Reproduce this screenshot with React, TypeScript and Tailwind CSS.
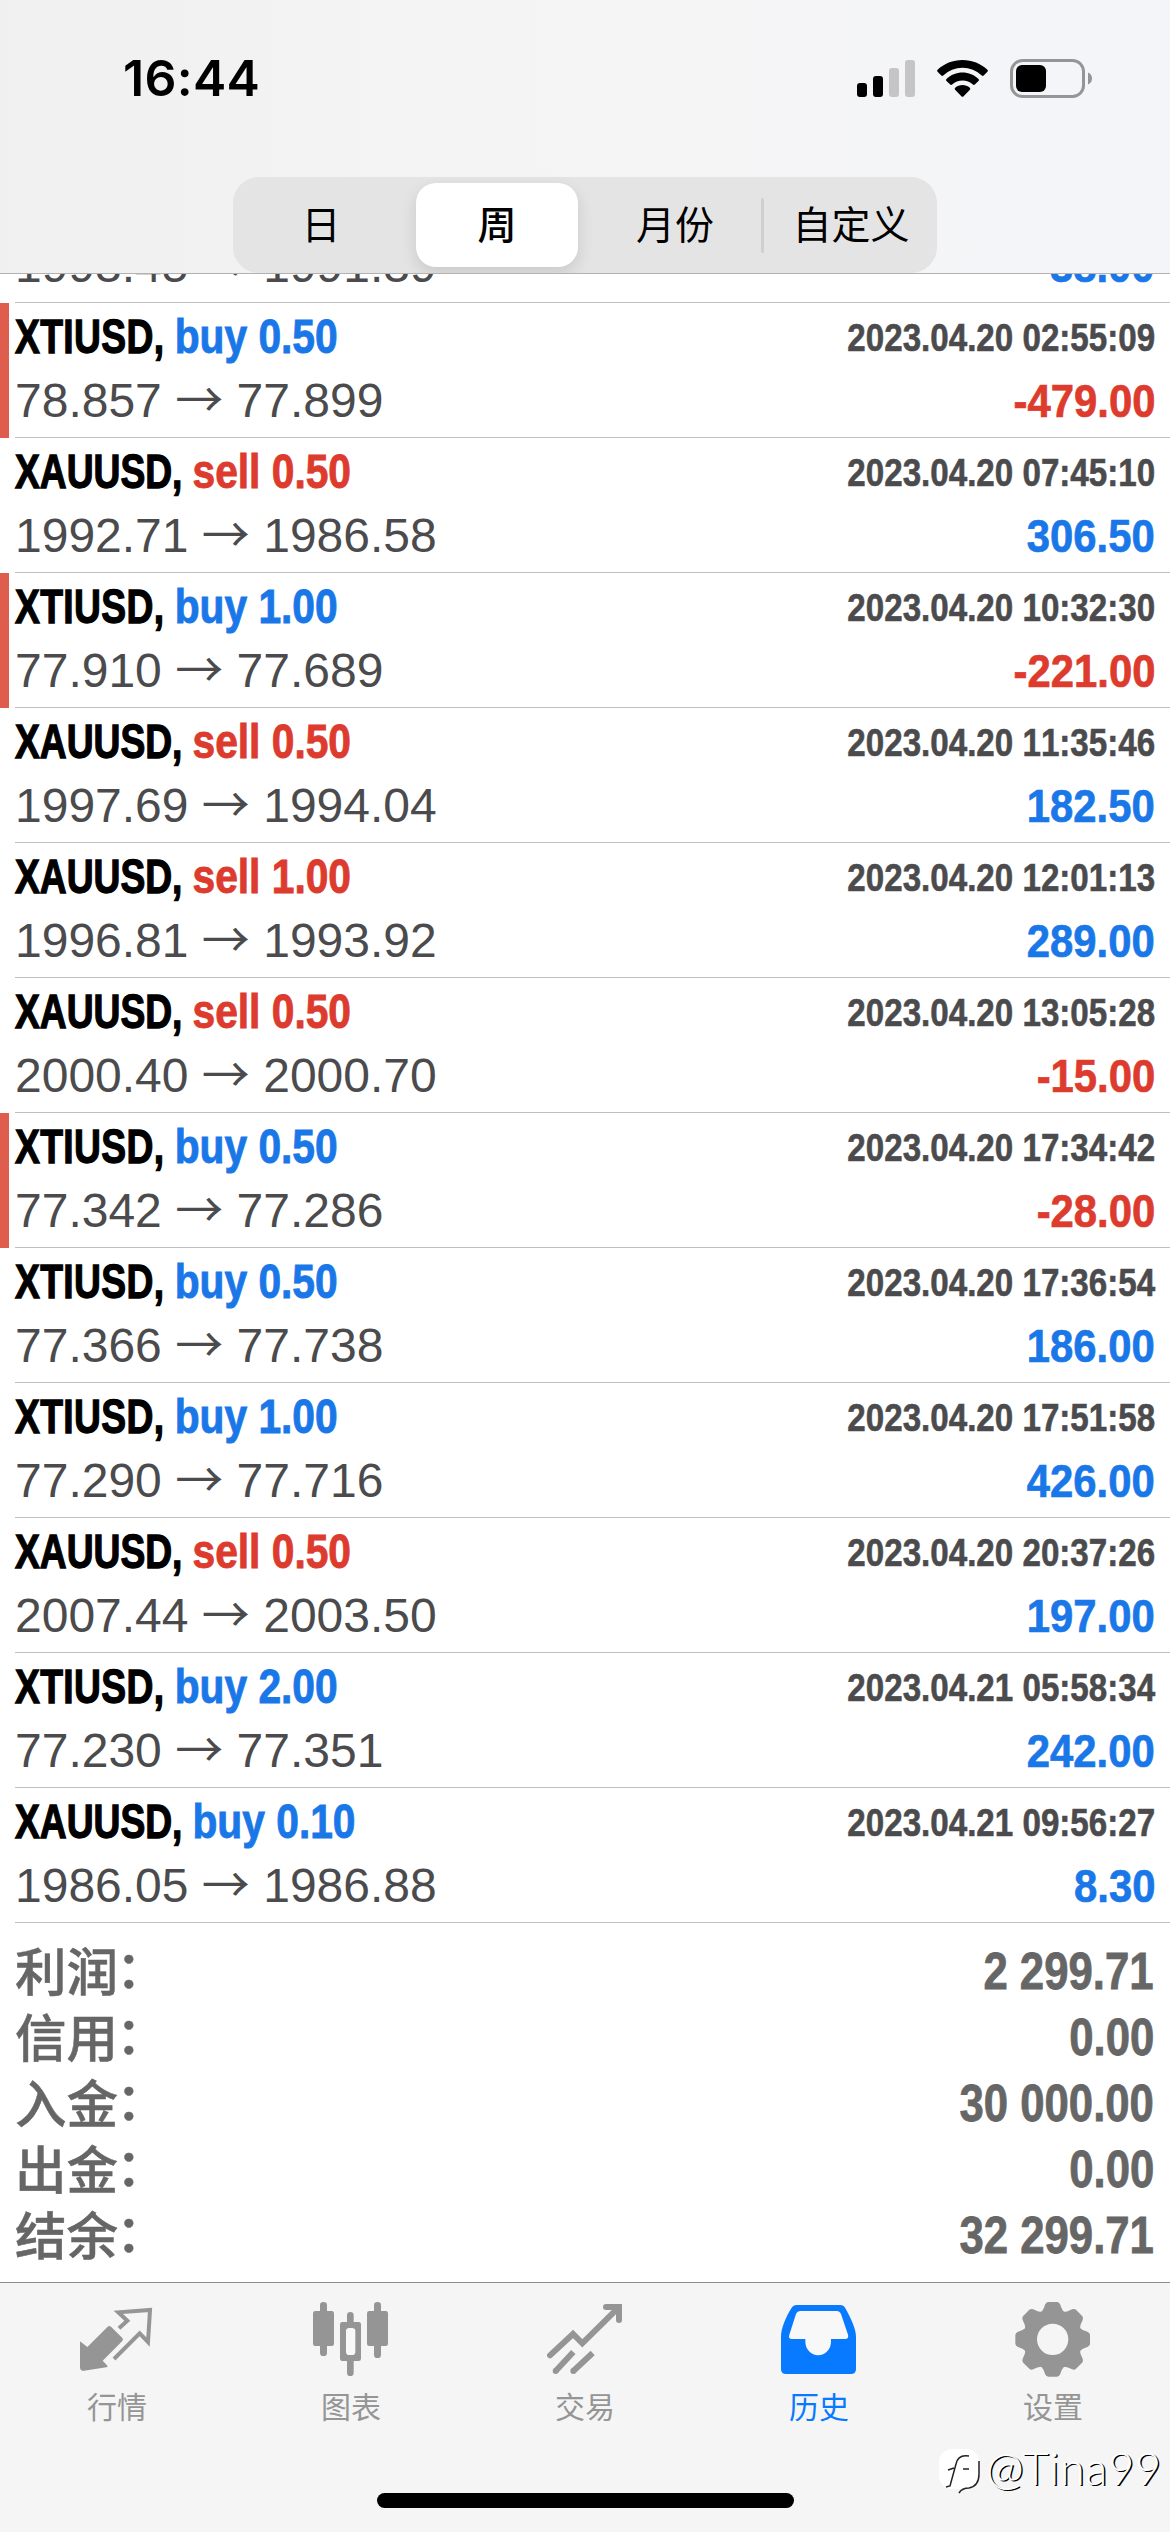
import clsx from 'clsx';
import type { ReactNode } from 'react';

interface Deal {
  symbol: string;
  side: 'buy' | 'sell';
  volume: string;
  open: string;
  close: string;
  time: string;
  profit: string;
  marked?: boolean;
}

const deals: Deal[] = [
  { symbol: 'XTIUSD', side: 'buy', volume: '0.50', open: '78.857', close: '77.899', time: '2023.04.20 02:55:09', profit: '-479.00', marked: true },
  { symbol: 'XAUUSD', side: 'sell', volume: '0.50', open: '1992.71', close: '1986.58', time: '2023.04.20 07:45:10', profit: '306.50' },
  { symbol: 'XTIUSD', side: 'buy', volume: '1.00', open: '77.910', close: '77.689', time: '2023.04.20 10:32:30', profit: '-221.00', marked: true },
  { symbol: 'XAUUSD', side: 'sell', volume: '0.50', open: '1997.69', close: '1994.04', time: '2023.04.20 11:35:46', profit: '182.50' },
  { symbol: 'XAUUSD', side: 'sell', volume: '1.00', open: '1996.81', close: '1993.92', time: '2023.04.20 12:01:13', profit: '289.00' },
  { symbol: 'XAUUSD', side: 'sell', volume: '0.50', open: '2000.40', close: '2000.70', time: '2023.04.20 13:05:28', profit: '-15.00' },
  { symbol: 'XTIUSD', side: 'buy', volume: '0.50', open: '77.342', close: '77.286', time: '2023.04.20 17:34:42', profit: '-28.00', marked: true },
  { symbol: 'XTIUSD', side: 'buy', volume: '0.50', open: '77.366', close: '77.738', time: '2023.04.20 17:36:54', profit: '186.00' },
  { symbol: 'XTIUSD', side: 'buy', volume: '1.00', open: '77.290', close: '77.716', time: '2023.04.20 17:51:58', profit: '426.00' },
  { symbol: 'XAUUSD', side: 'sell', volume: '0.50', open: '2007.44', close: '2003.50', time: '2023.04.20 20:37:26', profit: '197.00' },
  { symbol: 'XTIUSD', side: 'buy', volume: '2.00', open: '77.230', close: '77.351', time: '2023.04.21 05:58:34', profit: '242.00' },
  { symbol: 'XAUUSD', side: 'buy', volume: '0.10', open: '1986.05', close: '1986.88', time: '2023.04.21 09:56:27', profit: '8.30' },
];

const summary = [
  { label: '利润', value: '2 299.71' },
  { label: '信用', value: '0.00' },
  { label: '入金', value: '30 000.00' },
  { label: '出金', value: '0.00' },
  { label: '结余', value: '32 299.71' },
];

const periods = ['日', '周', '月份', '自定义'];

const sans = "font-['Liberation_Sans',sans-serif]";
const cjk = "font-['Noto_Sans_CJK_SC',sans-serif]";

function StatusBar() {
  return (
    <div className="flex h-[156px] items-center justify-between pr-[78px] pl-[123px]">
      <span className="font-['Inter',sans-serif] text-[50px] leading-none font-semibold tracking-[0.3px]">16:44</span>
      <div className="flex items-center">
        <svg width="58" height="37" viewBox="0 0 58 37">
          <rect x="0" y="23" width="10" height="14" rx="3" />
          <rect x="16" y="16" width="10" height="21" rx="3" />
          <rect x="32" y="8" width="10" height="29" rx="3" fill="#c5c5c5" />
          <rect x="48" y="0" width="10" height="37" rx="3" fill="#c5c5c5" />
        </svg>
        <svg className="ml-[22px]" width="51" height="37" viewBox="0 0 51 37">
          <path d="M25.500 0C35 0 44 3.600 50.400 9.800c.6.600.6 1.500 0 2L46.700 15.500c-.5.500-1.300.5-1.900 0a28 28 0 0 0-38.600 0c-.6.500-1.400.5-1.900 0L.6 11.800c-.6-.5-.6-1.400 0-2C7 3.600 16 0 25.500 0Z" />
          <path d="M25.500 12.600c6 0 11.700 2.300 16 6.300.6.500.6 1.400 0 2l-3.700 3.700c-.5.500-1.300.5-1.900 0a15.300 15.300 0 0 0-20.800 0c-.6.500-1.400.5-1.900 0l-3.700-3.700c-.6-.6-.6-1.500 0-2 4.300-4 10-6.300 16-6.300Z" />
          <path d="M25.500 25c2.700 0 5.300 1 7.300 2.800.6.500.6 1.300.1 1.900l-6.500 6.700c-.5.500-1.300.5-1.800 0l-6.500-6.700c-.5-.6-.5-1.400.1-1.900C20.200 26 22.800 25 25.500 25Z" />
        </svg>
        <svg className="ml-[22px]" width="82" height="39" viewBox="0 0 82 39">
          <rect x="1.500" y="1.500" width="72" height="36" rx="11" fill="none" stroke="#959595" strokeWidth="3" />
          <rect x="6" y="6" width="30" height="27" rx="6" />
          <path d="M78 13.500c2.500 1 4 3.300 4 6s-1.500 5-4 6Z" fill="#959595" />
        </svg>
      </div>
    </div>
  );
}

function PeriodPicker() {
  return (
    <div className="mx-auto mt-[21px] grid h-[96px] w-[704px] grid-cols-4 rounded-[26px] bg-[#e5e4e5]">
      {periods.map((period, index) => (
        <div
          key={period}
          className={clsx('flex items-center justify-center py-[6px]', index === 3 && 'relative')}
        >
          {index === 3 && <span className="absolute top-[21px] left-0 h-[55px] w-[3px] rounded-full bg-[#cfcfd1]" />}
          <span
            className={clsx(
              'flex h-[84px] w-[162px] items-center justify-center pb-[6px] text-[39px] leading-none whitespace-nowrap',
              cjk,
              index > 1 && 'pl-[4px]',
              index === 1 && 'rounded-[20px] bg-white font-medium shadow-[0_6px_16px_rgba(0,0,0,0.12)]',
            )}
          >
            {period}
          </span>
        </div>
      ))}
    </div>
  );
}

function PriceLine({ open, close, profit }: Pick<Deal, 'open' | 'close' | 'profit'>) {
  return (
    <div className={clsx('flex h-[65px] shrink-0 items-center justify-between whitespace-nowrap', sans)}>
      <p className="text-[48px] leading-none text-[#4b4b4d]">
        {open} <span className={clsx('leading-[0]', cjk)}>→</span> {close}
      </p>
      <p
        className={clsx(
          'origin-right scale-x-[0.89] text-[47px] leading-none font-bold [-webkit-text-stroke:0.7px_currentColor]',
          profit.startsWith('-') ? 'text-[#dc3b2e]' : 'text-[#1a77e8]',
        )}
      >
        {profit}
      </p>
    </div>
  );
}

function DealRow({ deal }: { deal: Deal }) {
  return (
    <div className="flex h-[135px]">
      <div className={clsx('w-[9px] shrink-0', deal.marked && 'bg-[#df5d4c]')} />
      <div className="ml-[6px] flex-1 border-b border-[#bfbfbf] pt-[3px] pr-[15px]">
        <div className={clsx('flex h-[62px] items-center justify-between font-bold whitespace-nowrap', sans)}>
          <p className="origin-left scale-x-[0.775] text-[48px] leading-none [-webkit-text-stroke:1.3px_currentColor]">
            <span className={clsx(deal.symbol === 'XTIUSD' && 'tracking-[0.5px]')}>{deal.symbol},</span>{' '}
            <span
              className={clsx(
                'inline-block origin-left scale-x-[1.095] [-webkit-text-stroke:0.9px_currentColor]',
                deal.side === 'buy' ? 'text-[#1a77e8]' : 'text-[#dc3b2e]',
              )}
            >
              {deal.side} {deal.volume}
            </span>
          </p>
          <p className="origin-right scale-x-[0.85] text-[39px] leading-none text-[#4b4b4d] [font-kerning:none] [-webkit-text-stroke:0.6px_currentColor]">
            {deal.time}
          </p>
        </div>
        <PriceLine open={deal.open} close={deal.close} profit={deal.profit} />
      </div>
    </div>
  );
}

function QuotesIcon() {
  return (
    <svg width="76" height="76" viewBox="237 96 228 228" fill="currentColor">
      <path d="M240 216Q240 213 243 216L262 231L323 170Q328 166 333 170L367 204Q371 209 367 213L308 272L321 286Q325 291 319 292L252 302Q240 304 240 292Z" />
      <path d="M357 175L382 152L355 127L450 120L444 216L419 190L342 267" fill="none" stroke="currentColor" strokeWidth="12" />
    </svg>
  );
}

function ChartIcon() {
  return (
    <svg width="76" height="76" viewBox="939 96 228 228" fill="currentColor">
      <rect x="960" y="96" width="21" height="162" rx="10" />
      <rect x="939" y="123" width="63" height="105" rx="7" />
      <rect x="1122" y="96" width="21" height="168" rx="10" />
      <rect x="1101" y="123" width="63" height="105" rx="7" />
      <rect x="1041" y="126" width="20" height="192" rx="10" />
      <rect x="1020" y="156" width="63" height="117" rx="7" />
      <rect x="1038" y="174" width="28" height="81" rx="10" fill="#f8f8f8" />
    </svg>
  );
}

function TradeIcon() {
  return (
    <svg width="76" height="76" viewBox="291 96 228 228" fill="none" stroke="currentColor" strokeWidth="18">
      <path d="M300 256L369 192L397 220L506 112" strokeLinecap="round" />
      <path d="M468 111H507V150" strokeLinecap="round" />
      <path d="M370 246L317 303M428 249L370 303" />
      <circle cx="317" cy="303" r="9" fill="currentColor" stroke="none" />
      <circle cx="370" cy="303" r="9" fill="currentColor" stroke="none" />
    </svg>
  );
}

function HistoryIcon() {
  return (
    <svg width="76" height="76" viewBox="993 96 228 228">
      <path
        d="M1040 105H1170Q1181 105 1186 115C1200 140 1218 175 1218 200V297Q1218 312 1203 312H1008Q993 312 993 297V200C993 175 1008 140 1024 115Q1030 105 1040 105Z"
        fill="currentColor"
      />
      <path
        d="M1052 123H1160Q1169 123 1173 132L1194 194Q1197 207 1185 207H1143V215A38 40 0 0 1 1066 215V207H1026Q1014 207 1018 194L1038 132Q1042 123 1052 123Z"
        fill="#f8f8f8"
      />
    </svg>
  );
}

const teeth = [0, 45, 90, 135, 180, 225, 270, 315];

function SettingsIcon() {
  return (
    <svg width="76" height="76" viewBox="465 96 228 228" fill="currentColor">
      <circle cx="578" cy="208" r="67" fill="none" stroke="currentColor" strokeWidth="40" />
      {teeth.map((angle) => (
        <path key={angle} transform={`rotate(${angle} 578 208)`} d="M534 132Q548 126 553 110Q557 96 565 96H591Q599 96 603 110Q608 126 622 132L604 150H552Z" />
      ))}
    </svg>
  );
}

const tabs: { label: string; icon: ReactNode; active?: boolean }[] = [
  { label: '行情', icon: <QuotesIcon /> },
  { label: '图表', icon: <ChartIcon /> },
  { label: '交易', icon: <TradeIcon /> },
  { label: '历史', icon: <HistoryIcon />, active: true },
  { label: '设置', icon: <SettingsIcon /> },
];

function Watermark() {
  return (
    <div className="absolute right-[8px] bottom-[36px] flex items-start gap-[5px] text-white">
      <svg width="42" height="48" viewBox="0 0 42 48">
        <rect x="0" y="1" width="40" height="40" rx="13" fill="#fff" />
        <path d="M40 13V26Q40 38 30 40Q23 40 20 45" fill="none" stroke="#222" strokeWidth="1.500" />
        <path d="M30 8Q19 6 17 16L11 38L7 39M9 22L15 20M24 21H30" fill="none" stroke="#222" strokeWidth="1.500" />
      </svg>
      <span className="font-['Lato',sans-serif] text-[45px] leading-[41px] font-light tracking-[0.8px] [text-shadow:1.5px_1px_0.5px_#000]">
        @Tina99
      </span>
    </div>
  );
}

export default function App() {
  return (
    <div className="flex h-[2532px] w-[1170px] flex-col overflow-hidden bg-white text-black">
      <header className="h-[274px] shrink-0 overflow-hidden border-b border-[#b2b2b2] bg-linear-to-r from-[#f0f0f0] via-[#f5f5f5] to-[#f4f5f9]">
        <StatusBar />
        <PeriodPicker />
      </header>

      <main className="h-[2008px] shrink-0">
        {/* last line of the deal that is scrolled under the header */}
        <div className="ml-[15px] flex h-[29px] flex-col justify-end overflow-hidden border-b border-[#bfbfbf] pr-[15px] pb-[4px]">
          <PriceLine open="1993.45" close="1991.39" profit="38.00" />
        </div>
        {deals.map((deal) => (
          <DealRow key={deal.time} deal={deal} />
        ))}
        <div className="pt-[15px] pr-[16px] pl-[15px] text-[#666]">
          {summary.map((line) => (
            <div key={line.label} className="flex h-[66px] items-center justify-between">
              <span
                className={clsx(
                  'flex pb-[5px] text-[51.5px] leading-none font-medium [-webkit-text-stroke:0.5px_currentColor]',
                  cjk,
                )}
              >
                {line.label}
                <span className="-mt-[3px] -ml-[2px]">：</span>
              </span>
              <span
                className={clsx(
                  'origin-right scale-x-[0.857] text-[51px] leading-none font-bold [-webkit-text-stroke:0.8px_currentColor]',
                  sans,
                )}
              >
                {line.value}
              </span>
            </div>
          ))}
        </div>
      </main>

      <nav className="relative h-[250px] shrink-0 border-t border-[#8e8e8e] bg-[#f5f5f5]">
        <div className="grid grid-cols-5 pt-[19px]">
          {tabs.map((tab) => (
            <div
              key={tab.label}
              className={clsx('flex flex-col items-center', tab.active ? 'text-[#087aff]' : 'text-[#959595]')}
            >
              {tab.icon}
              <span className={clsx('mt-[12px] text-[30px] leading-none', cjk)}>{tab.label}</span>
            </div>
          ))}
        </div>
        <div className="absolute bottom-[24px] left-[377px] h-[15px] w-[417px] rounded-full bg-black" />
        <Watermark />
      </nav>
    </div>
  );
}
